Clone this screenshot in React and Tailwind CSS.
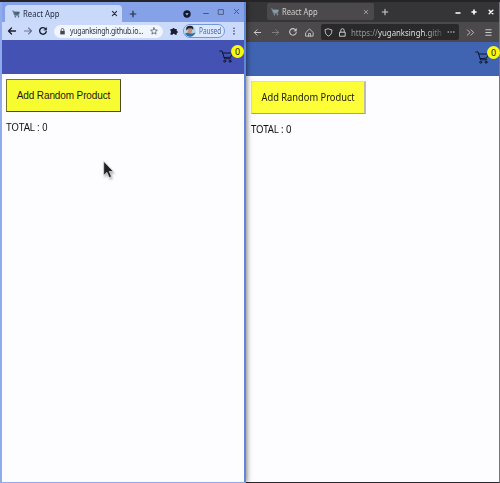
import React from 'react';

const stroke = { fill: 'none', stroke: 'currentColor', strokeLinecap: 'round', strokeLinejoin: 'round' };

function Glyph({ d, className = '', w = 1.2, size = 10 }) {
  return (
    <svg viewBox="0 0 10 10" width={size} height={size} className={`shrink-0 ${className}`} {...stroke} strokeWidth={w}>
      <path d={d} />
    </svg>
  );
}

const BACK = 'M8.5 5H1.5M4.5 2L1.5 5l3 3';
const FORWARD = 'M1.5 5h7M5.5 2l3 3-3 3';
const CROSS = 'M2 2l6 6M8 2L2 8';
const PLUS = 'M5 1.5v7M1.5 5h7';

function Reload({ className, w }) {
  return (
    <svg viewBox="0 0 10 10" width="10" height="10" className={`shrink-0 ${className}`} {...stroke} strokeWidth={w}>
      <path d="M7.6 2.9A3.3 3.3 0 1 0 8.2 5.6" />
      <path d="M8.7 1.3v3H5.8z" fill="currentColor" strokeWidth="0.2" />
    </svg>
  );
}

function Cart({ className = '' }) {
  return (
    <svg viewBox="0 0 14 13" width="14" height="13" className={`shrink-0 ${className}`} {...stroke} strokeWidth="1">
      <path d="M.7 1h2.4l2.4 7.8h6.3M3.8 3h9.6l-1.8 4.2-6.5.4" />
      <circle cx="5.7" cy="11.2" r="1" />
      <circle cx="11" cy="11.2" r="1" />
    </svg>
  );
}

function TabCart({ className = '' }) {
  return (
    <svg viewBox="0 0 8 8" width="8" height="8" className={`shrink-0 ${className}`} {...stroke} strokeWidth="0.7">
      <path d="M.4 1h1.3l1.1 4.3h4" />
      <path d="M2 2h5.4l-.7 2.4-4 .4z" fill="currentColor" />
      <circle cx="3.2" cy="6.8" r=".4" />
      <circle cx="6.3" cy="6.8" r=".4" />
    </svg>
  );
}

function CartBadge({ className }) {
  return (
    <div className={`relative h-5 w-[25px] ${className}`}>
      <Cart className="mt-[5px] text-[#10152c]" />
      <span className="absolute top-0 left-[12px] flex size-[13px] items-center justify-center rounded-full bg-[#fbfb12] text-[9px] leading-none text-[#202010]">
        0
      </span>
    </div>
  );
}

function Avatar() {
  return (
    <svg viewBox="0 0 12 12" width="12" height="12" className="shrink-0">
      <clipPath id="face"><circle cx="6" cy="6" r="5.7" /></clipPath>
      <g clipPath="url(#face)">
        <path fill="#b9d1e4" d="M0 0h12v12H0z" />
        <path fill="#2671aa" d="M0 12V9l4-1.5 4 1 4-1V12z" />
        <path fill="#c98a78" d="M3.8 3.5h4.2v3L6.5 9 4 7.5z" />
        <path fill="#26242b" d="M2.5 5.5C1.5 1.5 3.5.7 6 .7s4 1 3 4.3L8 3.6H4.2z" />
      </g>
    </svg>
  );
}

function ChromeWindow() {
  return (
    <section className="relative z-10 flex w-[246px] shrink-0 flex-col border-r-2 border-b border-l-2 border-[#8fabee] border-r-[#6287d9] bg-[#fdfcfe] shadow-[1px_0_5px_rgba(0,0,0,0.5)]">
      <div className="flex h-5 shrink-0 items-start bg-[#85a2e9] text-[#252e42]">
        <div className="mt-[3px] ml-[3px] flex h-[17px] w-[117px] items-center rounded-t-[4px] bg-[#c9d9fa]">
          <TabCart className="ml-[7px] text-[#47647a]" />
          <span className="ml-[3px] w-[88px] origin-left scale-x-[0.86] whitespace-nowrap text-[9px] leading-none">React App</span>
          <Glyph d={CROSS} size={7} w={1.6} />
        </div>
        <Glyph d={PLUS} size={8} w={1.5} className="mt-[8px] ml-[7px]" />
        <svg viewBox="0 0 8 8" width="8" height="8" className="mt-[8px] ml-[46px] shrink-0">
          <circle cx="4" cy="4" r="3.7" fill="#121a31" />
          <path d="M2.3 3.2h3.4L4 5.6z" fill="#a5bdf2" />
        </svg>
        <Glyph d="M2 8h6" size={8} w={1.3} className="mt-[5px] ml-[11px] text-[#4b5772]" />
        <Glyph d="M2 2h6v6H2z" size={8} w={1.1} className="mt-[6px] ml-[7px] text-[#4b5772]" />
        <Glyph d={CROSS} size={7} w={1.4} className="mt-[6px] ml-[8px] text-[#4b5772]" />
      </div>
      <div className="flex h-[18px] shrink-0 items-center bg-[#cbdafa] text-[#171e2f]">
        <Glyph d={BACK} w={1.3} className="ml-[5px]" />
        <Glyph d={FORWARD} w={1.1} className="ml-[6px] text-[#6a7696]" />
        <Reload w={1.4} className="ml-[5px]" />
        <div className="ml-[6px] flex h-[13px] w-[109px] items-center rounded-full bg-[#f1f5fd]">
          <svg viewBox="0 0 6 8" width="5" height="7" className="ml-[6px] shrink-0">
            <path fill="#414756" d="M.3 3.3h5.4v4.2H.3z" />
            <path d="M1.4 3.4V2a1.6 1.6 0 0 1 3.2 0v1.4" fill="none" stroke="#414756" />
          </svg>
          <span className="ml-[5px] w-[76px] origin-left scale-x-[0.82] whitespace-nowrap text-[8.5px] leading-none tracking-[-0.3px] text-[#2d3444]">yuganksingh.github.io...</span>
          <Glyph d="M5 1l1.2 2.7 3 .3-2.3 2 .7 2.9L5 7.4 2.4 8.9l.7-2.9-2.3-2 3-.3z" size={8} w={1} className="ml-[4px] text-[#525c70]" />
        </div>
        <svg viewBox="0 0 8 8" width="8" height="8" className="ml-[7px] shrink-0" fill="currentColor">
          <path d="M.5 2h2a1.1 1.1 0 1 1 2.2 0h2v2a1.1 1.1 0 1 1 0 2.2v1.6H4.9a1.1 1.1 0 0 0-2.2 0H.5V6a1.1 1.1 0 0 0 0-2z" />
        </svg>
        <div className="ml-[5px] flex h-[14px] w-[42px] items-center rounded-full border border-[#7396dd] bg-[#dce8fc] text-[#4668b8]">
          <Avatar />
          <span className="ml-[3px] w-[20px] origin-left scale-x-[0.82] whitespace-nowrap text-[8px] leading-none tracking-[-0.1px]">Paused</span>
        </div>
        <Glyph d="M5 1.5v.1M5 5v.1M5 8.5v.1" size={8} w={1.7} className="ml-[5px]" />
      </div>
      <header className="flex h-[34px] shrink-0 justify-end bg-[#4453b3]">
        <CartBadge className="mt-[5px]" />
      </header>
      <main className="flex flex-col items-start pl-1">
        <button className="mt-[5px] h-[33px] w-[115px] whitespace-nowrap border border-[#77772d] border-r-[#4b4b24] border-b-[#4b4b1e] bg-[#f7fc30] font-['Liberation_Sans',sans-serif] text-[10px] tracking-[-0.12px] text-[#202018]">
          Add Random Product
        </button>
        <p className="mt-[10px] origin-left scale-x-[0.94] whitespace-nowrap font-['Liberation_Sans',sans-serif] text-[10px] leading-[11px] tracking-[-0.1px] text-[#111]">TOTAL : 0</p>
      </main>
      <svg viewBox="0 0 11 18" width="11" height="19" className="absolute top-[158px] left-[101px] drop-shadow-[1px_2px_1px_rgba(0,0,0,0.3)]">
        <path d="M.7.8v14l3.2-3 2.3 5.3 2.3-1-2.3-5.1h4.1z" fill="#222" stroke="#eee" strokeWidth=".6" />
      </svg>
    </section>
  );
}

function FirefoxWindow() {
  return (
    <section className="flex w-[254px] flex-col border-r border-b border-[#77767a] border-b-[#27272c] bg-[#fdfcfe]">
      <div className="flex h-5 shrink-0 items-start bg-[#353436] text-[#d0d0d0]">
        <div className="mt-px ml-[21px] flex h-[17px] w-[107px] items-center rounded-[2px] bg-[#4b494b]">
          <TabCart className="ml-[4px] text-[#899daa]" />
          <span className="ml-[3px] w-[75px] origin-left scale-x-[0.84] whitespace-nowrap text-[9px] leading-none">React App</span>
          <Glyph d={CROSS} size={6} w={1.4} className="ml-[6px] text-[#aaa]" />
        </div>
        <Glyph d={PLUS} size={8} w={1.3} className="mt-[6px] ml-[6.5px]" />
        <Glyph d="M2.5 7.5h5" size={8} w={1.8} className="mt-[5px] ml-[65px] text-white" />
        <Glyph d="M5 2.5v5M2.5 5h5" size={8} w={2} className="mt-[6px] ml-[8.5px] text-white" />
        <Glyph d="M2.7 2.7l4.6 4.6M7.3 2.7l-4.6 4.6" size={8} w={1.8} className="mt-[6px] ml-[8.5px] text-white" />
      </div>
      <div className="flex h-5 shrink-0 items-center bg-[#4b494b] text-[#c9c9c9]">
        <Glyph d={BACK} size={9} w={1.1} className="ml-[7px]" />
        <Glyph d={FORWARD} size={9} w={1} className="ml-[9px] text-[#858385]" />
        <Reload w={1.1} className="ml-[8px]" />
        <svg viewBox="0 0 10 10" width="9" height="9" className="ml-[7px] shrink-0" {...stroke} strokeWidth="1">
          <path d="M1 5l4-4 4 4v4H1zM4 9V6h2v3" />
        </svg>
        <div className="ml-[7px] flex h-4 w-[138px] items-center rounded-[2px] bg-[#29282a]">
          <Glyph d="M5 1l3.8 1.2C8.8 6 7.5 8 5 9 2.5 8 1.2 6 1.2 2.2z" size={9} w={1} className="ml-[3px]" />
          <svg viewBox="0 0 7 9" width="7" height="9" className="ml-[6px] shrink-0" {...stroke} strokeWidth="1">
            <path d="M.8 4.2h5.4v4H.8zM1.8 4V2.4a1.7 1.7 0 0 1 3.4 0V4" />
          </svg>
          <span className="ml-[5px] w-[91px] origin-left scale-x-[0.87] whitespace-nowrap text-[9px] leading-[13px] text-[#969496]">
            https://<span className="bg-gradient-to-r from-[#eee] from-70% to-[#555] bg-clip-text text-transparent">yuganksingh.gith</span>
          </span>
          <Glyph d="M1.5 5h.1M5 5h.1M8.5 5h.1" size={8} w={1.8} className="ml-[5px]" />
        </div>
        <Glyph d="M1.5 2l3 3-3 3M5.5 2l3 3-3 3" size={9} w={1} className="ml-[7px]" />
        <Glyph d="M2 2h6M2 5h6M2 8h6" size={9} w={1.2} className="ml-[8.5px]" />
      </div>
      <header className="flex h-[34px] shrink-0 justify-end bg-[#4064b2]">
        <CartBadge className="-mr-px mt-[4px]" />
      </header>
      <main className="flex flex-col items-start pl-[5px]">
        <button className="mt-[5px] h-[33px] w-[115px] whitespace-nowrap border border-[#dedeae] border-r-2 border-r-[#bdbca8] border-b-[#a5a574] bg-[#fdfd38] text-[10px] text-[#202018]">
          <span className="-mx-2 inline-block scale-x-[0.93]">Add Random Product</span>
        </button>
        <p className="mt-[10px] origin-left scale-x-[0.96] whitespace-nowrap text-[10px] leading-[11px] tracking-[-0.1px] text-[#111]">TOTAL : 0</p>
      </main>
    </section>
  );
}

export default function App() {
  return (
    <div className="flex h-[483px] w-[500px] overflow-hidden border-t-2 border-[#242326] bg-[#fdfcfe] font-['Noto_Sans','Open_Sans',sans-serif]">
      <ChromeWindow />
      <FirefoxWindow />
    </div>
  );
}
